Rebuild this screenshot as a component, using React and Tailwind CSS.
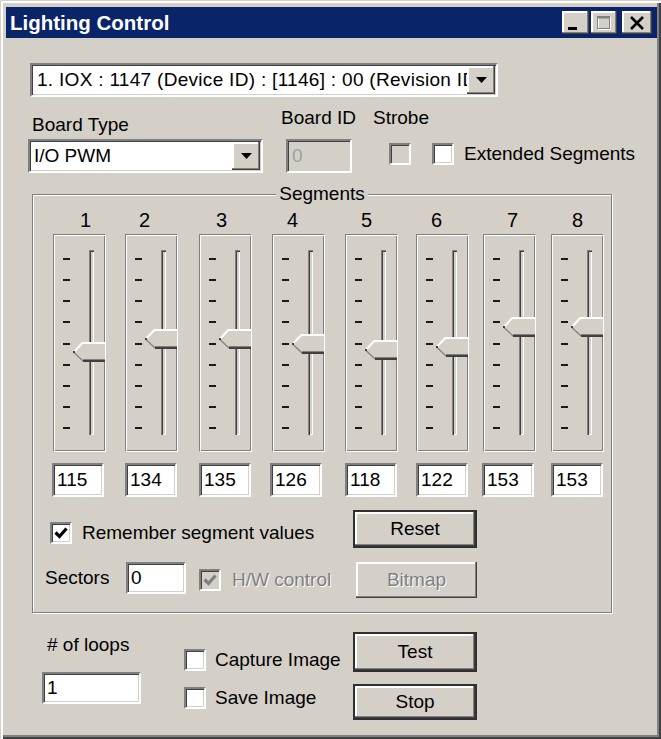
import React from "react";

const FONT = "font-['Liberation_Sans',Arial,sans-serif]";

const sunken =
  "border-2 border-t-[#808080] border-l-[#808080] border-r-white border-b-white shadow-[inset_1px_1px_0_#404040,inset_-1px_-1px_0_#d4d0c8]";
const raised =
  "bg-[#d4d0c8] shadow-[inset_-1px_-1px_0_#404040,inset_-2px_-2px_0_#808080,inset_2px_2px_0_#fff]";
const defBtn =
  "bg-[#d4d0c8] border-2 border-[#303030] shadow-[inset_-1px_-1px_0_#404040,inset_-2px_-2px_0_#808080,inset_2px_2px_0_#fff]";
const etched =
  "border border-t-[#808080] border-l-[#808080] border-r-white border-b-white shadow-[inset_1px_1px_0_#fff,inset_-1px_-1px_0_#808080]";
const disabledText = "text-[#808080] [text-shadow:1px_1px_0_#fff]";

const segments = [
  { n: 1, v: 115, ml: "ml-[20px]", lp: "pl-[27px]", tb: "-ml-px" },
  { n: 2, v: 134, ml: "ml-[19px]", lp: "pl-[14px]", tb: "" },
  { n: 3, v: 135, ml: "ml-[21px]", lp: "pl-[17px]", tb: "" },
  { n: 4, v: 126, ml: "ml-[20px]", lp: "pl-[15px]", tb: "-ml-[2px]" },
  { n: 5, v: 118, ml: "ml-[20px]", lp: "pl-[16px]", tb: "" },
  { n: 6, v: 122, ml: "ml-[18px]", lp: "pl-[15px]", tb: "" },
  { n: 7, v: 153, ml: "ml-[14px]", lp: "pl-[24px]", tb: "-ml-px" },
  { n: 8, v: 153, ml: "ml-[15px]", lp: "pl-[21px]", tb: "" },
];

function DropArrow() {
  return (
    <div className={`w-[28px] h-[28px] my-auto mr-px flex items-center justify-center ${raised}`}>
      <svg width="11" height="6" viewBox="0 0 11 6">
        <polygon points="0,0 11,0 5.5,6" fill="#000" />
      </svg>
    </div>
  );
}

function Check({ checked, disabled, grayBg }) {
  return (
    <div
      className={`w-[22px] h-[22px] shrink-0 flex items-center justify-center ${sunken} ${
        grayBg ? "bg-[#d4d0c8]" : "bg-white"
      }`}
    >
      {checked && (
        <svg width="16" height="16" viewBox="0 0 16 16">
          <polyline
            points="2.5,7.5 6.5,11.5 13.5,3.5"
            fill="none"
            stroke={disabled ? "#808080" : "#000"}
            strokeWidth="3.2"
          />
        </svg>
      )}
    </div>
  );
}

function Thumb({ value }) {
  const top = Math.round(181 - value * 0.647);
  return (
    <svg
      className="absolute left-[19px]"
      style={{ top }}
      width="32"
      height="20"
      viewBox="0 0 32 20"
    >
      <polygon points="0,10 9,0 32,0 32,20 10,20" fill="#d4d0c8" />
      <polyline points="0.8,10 9.3,1 32,1" fill="none" stroke="#fff" strokeWidth="2" />
      <line x1="1" y1="10.5" x2="10" y2="19" stroke="#808080" strokeWidth="1.2" />
      <line x1="10" y1="17.5" x2="32" y2="17.5" stroke="#808080" strokeWidth="1" />
      <line x1="10" y1="19" x2="32" y2="19" stroke="#404040" strokeWidth="2" />
      <rect x="0" y="9" width="2" height="2" fill="#404040" />
    </svg>
  );
}

function Slider({ value }) {
  return (
    <div className={`mt-[2px] relative w-[53px] h-[218px] flex items-start ${etched}`}>
      <div className="ml-[9px] mt-[23px] h-[171px] flex flex-col justify-between">
        {Array.from({ length: 9 }).map((_, i) => (
          <div key={i} className="w-[7px] h-[2px] bg-[#1a1a1a]" />
        ))}
      </div>
      <div className="ml-[19px] mt-[15px] w-[5px] h-[185px] bg-[#d4d0c8] shadow-[inset_1px_1px_0_#808080,inset_2px_2px_0_#404040,inset_-1px_-1px_0_#fff]" />
      <Thumb value={value} />
    </div>
  );
}

export default function App() {
  return (
    <div
      className={`w-[661px] h-[739px] bg-[#d4d0c8] text-[19px] leading-[24px] text-black ${FONT} flex flex-col overflow-hidden shadow-[inset_1px_1px_0_#d4d0c8,inset_3px_3px_0_#fff,inset_-2px_-2px_0_#404040,inset_-4px_-4px_0_#808080]`}
    >
      {/* title bar */}
      <div className="ml-[6px] mt-[7px] w-[651px] h-[31px] bg-[#0a246a] flex items-center pl-[4px] pr-[5px]">
        <span className="text-white font-bold text-[20.5px]">Lighting Control</span>
        <div className="ml-auto flex items-center">
          <div className={`w-[27px] h-[23px] flex items-end pl-[6px] pb-[4px] ${raised}`}>
            <div className="w-[9px] h-[3px] bg-black" />
          </div>
          <div className={`ml-[2px] w-[26px] h-[23px] flex items-center justify-center ${raised}`}>
            <svg width="16" height="16" viewBox="0 0 16 16">
              <rect x="2.5" y="2.5" width="12" height="12" fill="none" stroke="#fff" strokeWidth="1" />
              <rect x="1.5" y="1.5" width="12" height="12" fill="none" stroke="#808080" strokeWidth="1" />
              <line x1="1" y1="2.5" x2="14" y2="2.5" stroke="#808080" strokeWidth="2" />
            </svg>
          </div>
          <div className={`ml-[5px] w-[30px] h-[23px] flex items-center justify-center ${raised}`}>
            <svg width="16" height="14" viewBox="0 0 16 14">
              <path d="M2 1 L14 13 M14 1 L2 13" stroke="#000" strokeWidth="2.6" />
            </svg>
          </div>
        </div>
      </div>

      {/* device combo */}
      <div className={`ml-[30px] mt-[25px] w-[468px] h-[34px] bg-white flex ${sunken}`}>
        <div className="flex-1 min-w-0 overflow-hidden whitespace-nowrap pl-[5px] self-center tracking-[0.3px]">
          1. IOX : 1147 (Device ID) : [1146] : 00 (Revision ID)
        </div>
        <DropArrow />
      </div>

      {/* board row */}
      <div className="flex items-start h-[76px]">
        <div className="ml-[28px] flex flex-col">
          <span className="mt-[16px] pl-[4px]">Board Type</span>
          <div className={`mt-[2px] w-[235px] h-[34px] bg-white flex ${sunken}`}>
            <div className="flex-1 pl-[4px] self-center">I/O PWM</div>
            <DropArrow />
          </div>
        </div>
        <div className="ml-[18px] w-[76px] flex flex-col">
          <span className="mt-[9px]">Board ID</span>
          <div className={`mt-[9px] ml-[5px] w-[66px] h-[34px] bg-[#d4d0c8] text-[#a0a0a0] pl-[4px] flex items-center ${sunken}`}>
            0
          </div>
        </div>
        <div className="ml-[16px] flex flex-col">
          <span className="mt-[9px]">Strobe</span>
          <div className="mt-[12px] flex items-center">
            <div className="ml-[16px]">
              <Check grayBg />
            </div>
            <div className="ml-[21px]">
              <Check />
            </div>
            <span className="ml-[10px] whitespace-nowrap">Extended Segments</span>
          </div>
        </div>
      </div>

      {/* segments group */}
      <div className="ml-[32px] mt-[21px] w-[580px] h-[419px] border border-[#808080] shadow-[inset_1px_1px_0_#fff,1px_1px_0_#fff] flex flex-col">
        <span className="-mt-[13px] self-center px-[3px] bg-[#d4d0c8]">Segments</span>

        <div className="mt-[2px] flex items-start">
          {segments.map((s) => (
            <div key={s.n} className={`flex flex-col ${s.ml}`}>
              <div className={`h-[24px] text-[20px] ${s.lp}`}>{s.n}</div>
              <Slider value={s.v} />
              <div className={`mt-[11px] w-[52px] h-[34px] bg-white pl-[3px] flex items-center ${sunken} ${s.tb}`}>
                {s.v}
              </div>
            </div>
          ))}
        </div>

        <div className="mt-[13px] flex items-start h-[38px]">
          <div className="w-[320px] mt-[11px] flex items-center">
            <div className="ml-[17px]">
              <Check checked />
            </div>
            <span className="ml-[10px] whitespace-nowrap">Remember segment values</span>
          </div>
          <button className={`w-[124px] h-[38px] ${defBtn}`}>Reset</button>
        </div>

        <div className="mt-[14px] flex items-start">
          <div className="w-[323px] flex items-start">
            <span className="ml-[12px] w-[81px] mt-[4px]">Sectors</span>
            <div className={`w-[60px] h-[32px] bg-white pl-[3px] flex items-center ${sunken}`}>0</div>
            <div className="ml-[13px] mt-[7px]">
              <Check checked disabled grayBg />
            </div>
            <span className={`ml-[11px] mt-[6px] whitespace-nowrap ${disabledText}`}>H/W control</span>
          </div>
          <button className={`w-[121px] h-[36px] ${raised} ${disabledText}`}>Bitmap</button>
        </div>
      </div>

      {/* bottom section */}
      <div className="flex items-start">
        <div className="ml-[42px] w-[99px] flex flex-col">
          <span className="mt-[20px] pl-[5px] whitespace-nowrap"># of loops</span>
          <div className={`mt-[15px] w-[99px] h-[32px] bg-white pl-[3px] flex items-center ${sunken}`}>1</div>
        </div>
        <div className="ml-[43px] w-[169px] flex flex-col">
          <div className="mt-[35px] flex items-center">
            <Check />
            <span className="ml-[9px] whitespace-nowrap">Capture Image</span>
          </div>
          <div className="mt-[14px] flex items-center">
            <Check />
            <span className="ml-[9px] whitespace-nowrap">Save Image</span>
          </div>
        </div>
        <div className="flex flex-col">
          <button className={`mt-[19px] w-[124px] h-[40px] ${defBtn}`}>Test</button>
          <button className={`mt-[12px] w-[124px] h-[36px] ${defBtn}`}>Stop</button>
        </div>
      </div>
    </div>
  );
}
